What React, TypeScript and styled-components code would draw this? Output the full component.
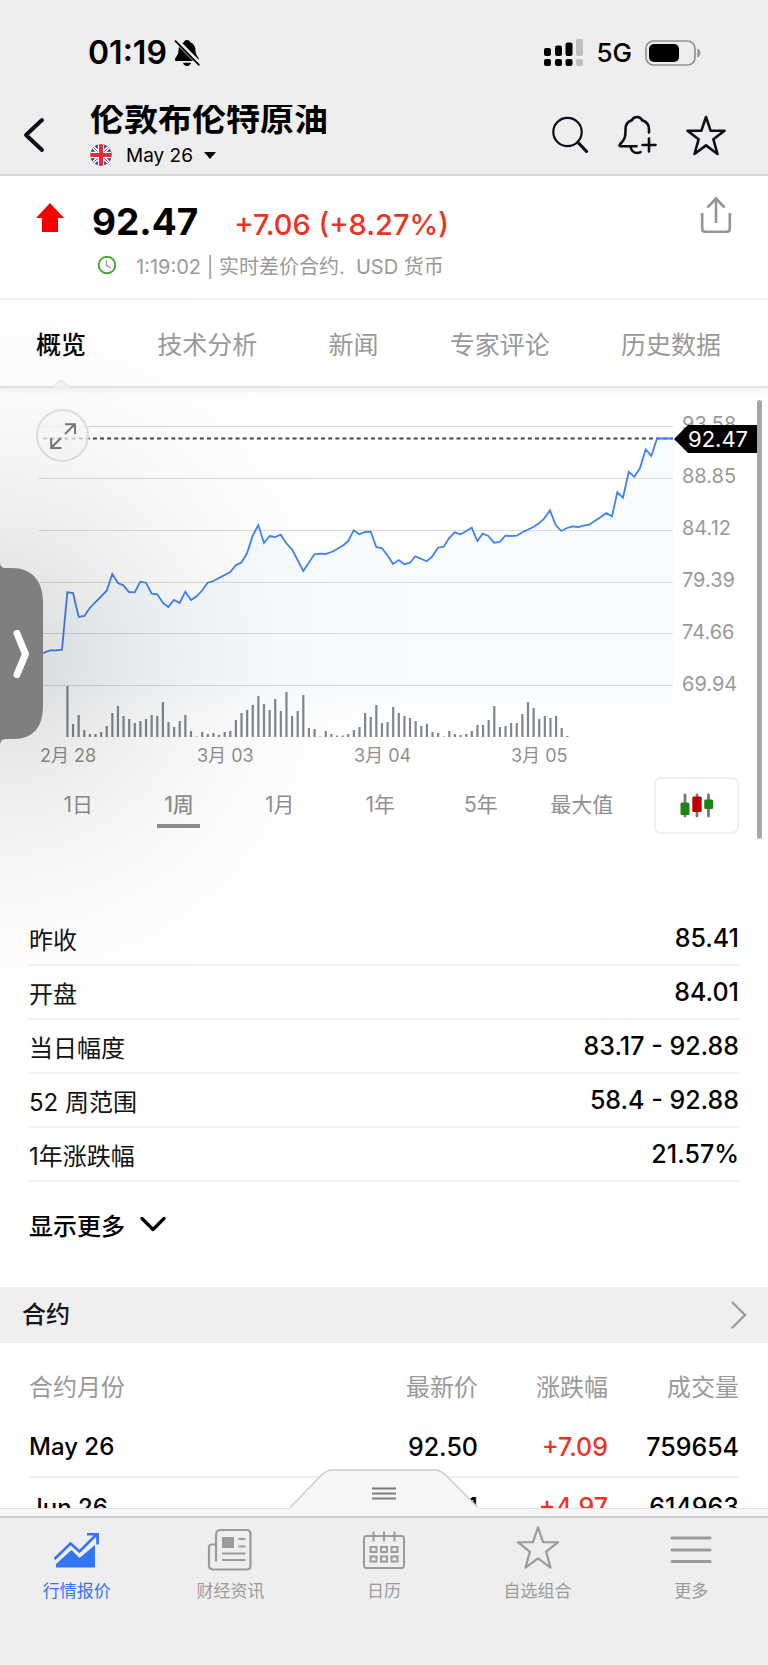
import React from "react";
import styled, { createGlobalStyle } from "styled-components";

const Global = createGlobalStyle`
  * { box-sizing: border-box; }
  html, body { margin: 0; padding: 0; background: #eeeeee; }
  body { font-family: Inter, "Noto Sans CJK SC", sans-serif; color: #000; }
  button { font: inherit; color: inherit; background: none; border: 0; padding: 0; cursor: pointer; }
  h1, h2, p { margin: 0; font-weight: inherit; font-size: inherit; }
  a { color: inherit; text-decoration: none; }
  svg { display: block; flex: none; }
`;

const Page = styled.div`
  position: relative;
  display: flex;
  flex-direction: column;
  height: 100vh;
  background: #fff;
`;

/* ---------- top ---------- */

const Top = styled.header`
  flex: none;
  background: #eeeeee;
  border-bottom: 2px solid #d6d6d6;
`;

const StatusBar = styled.div`
  display: flex;
  align-items: center;
  justify-content: space-between;
  height: 105px;
  padding: 0 67px 0 88px;
`;

const StatusGroup = styled.div<{ $gap: number }>`
  display: flex;
  align-items: center;
  gap: ${(p) => p.$gap}px;
`;

const Clock = styled.time`
  font-size: 32px;
  font-weight: 600;
  line-height: 40px;
`;

const Network = styled.span`
  font-size: 26px;
  font-weight: 500;
  line-height: 32px;
`;

const TitleBar = styled.div`
  display: flex;
  align-items: flex-start;
  height: 69px;
  padding: 0 42px 0 22px;
`;

const BackButton = styled.button`
  width: 68px;
  padding-top: 12px;
`;

const TitleBlock = styled.div`
  flex: 1;
`;

const TitleClip = styled.div`
  display: flex;
  align-items: flex-end;
  height: 34px;
  overflow: hidden;
`;

const Title = styled.h1`
  font-size: 34px;
  font-weight: 700;
  line-height: 40px;
`;

const ContractButton = styled.button`
  display: flex;
  align-items: center;
  height: 32px;
  font-size: 19px;
  gap: 11px;
`;

const ContractName = styled.span`
  margin-left: 3px;
`;

const TitleActions = styled.div`
  display: flex;
  gap: 28px;
  padding-top: 10px;
`;

/* ---------- quote ---------- */

const Quote = styled.section`
  flex: none;
  display: flex;
  height: 124px;
  padding: 20px 36px 0;
  border-bottom: 2px solid #f1f1f2;
`;

const ArrowCell = styled.div`
  width: 56px;
  padding-top: 7px;
`;

const QuoteBody = styled.div`
  flex: 1;
`;

const PriceRow = styled.div`
  display: flex;
  align-items: baseline;
  gap: 36px;
  line-height: 52px;
`;

const Price = styled.strong`
  font-size: 37px;
  font-weight: 700;
`;

const Change = styled.span`
  font-size: 29px;
  font-weight: 500;
  color: #ee3224;
`;

const MetaRow = styled.div`
  display: flex;
  align-items: center;
  gap: 19px;
  padding-left: 5px;
  height: 28px;
  font-size: 20px;
  color: #999;
  white-space: pre;
`;

const ShareButton = styled.button`
  align-self: flex-start;
`;

/* ---------- tabs ---------- */

const Tabs = styled.nav`
  position: relative;
  z-index: 1;
  flex: none;
  display: flex;
  align-items: center;
  justify-content: space-between;
  height: 88px;
  padding: 0 47px 0 36px;
  border-bottom: 2px solid #e2e2e2;
  box-shadow: 0 3px 5px rgba(0, 0, 0, 0.05);
`;

const Tab = styled.a<{ $active?: boolean }>`
  position: relative;
  padding-top: 4px;
  font-size: 25px;
  line-height: 82px;
  font-weight: ${(p) => (p.$active ? 500 : 400)};
  color: ${(p) => (p.$active ? "#000" : "#999")};
`;

const Notch = styled.svg`
  position: absolute;
  bottom: -2px;
  left: 50%;
  margin-left: -9px;
`;

/* ---------- chart ---------- */

const Content = styled.main`
  position: relative;
  flex: 1;
  min-height: 0;
  overflow: hidden;
`;

const ChartArea = styled.section`
  position: relative;
  display: grid;
  grid-template-columns: 1fr 95px;
  padding: 12px 0 0 39px;
`;

const Plot = styled.svg`
  width: 100%;
  height: auto;
`;

const Axis = styled.div`
  position: relative;
  display: flex;
  flex-direction: column;
  padding-left: 9px;
  font-size: 20px;
  line-height: 52px;
  margin-top: -2px;
  color: #999;
`;

const PriceTag = styled.div`
  position: absolute;
  left: 1px;
  top: 27px;
  width: 84px;
  height: 28px;
  padding-left: 14px;
  background: #000;
  clip-path: polygon(0 50%, 14px 0, 100% 0, 100% 100%, 14px 100%);
  color: #fff;
  font-size: 22px;
  line-height: 28px;
`;

const ExpandButton = styled.button`
  position: absolute;
  left: 36px;
  top: 21px;
  display: grid;
  place-items: center;
  width: 53px;
  height: 53px;
  border: 2px solid #e2e2e2;
  border-radius: 50%;
  background: rgba(252, 252, 252, 0.75);
`;

const Dates = styled.div`
  display: grid;
  grid-template-columns: repeat(4, 1fr);
  padding: 3px 100px 0 40px;
  font-size: 18px;
  line-height: 26px;
  color: #8f8f8f;
`;

const RangeRow = styled.div`
  display: flex;
  align-items: center;
  gap: 22px;
  padding: 8px 29px 0 28px;
`;

const Ranges = styled.div`
  flex: 1;
  display: grid;
  grid-template-columns: repeat(6, 1fr);
  justify-items: center;
`;

const Range = styled.button<{ $active?: boolean }>`
  min-width: 43px;
  height: 44px;
  padding-top: 3px;
  font-size: 21px;
  line-height: 34px;
  font-weight: ${(p) => (p.$active ? 500 : 400)};
  color: #8f8f8f;
  border-bottom: 4px solid ${(p) => (p.$active ? "#8f9190" : "transparent")};
`;

const CandleButton = styled.button`
  display: grid;
  place-items: center;
  width: 85px;
  height: 57px;
  border: 2px solid #efefef;
  border-radius: 7px;
  background: #fff;
`;

/* ---------- stats ---------- */

const Stats = styled.dl`
  margin: 0;
  padding: 78px 29px 0;
`;

const StatRow = styled.div`
  display: flex;
  align-items: center;
  justify-content: space-between;
  height: 54px;
  border-bottom: 2px solid #f3f3f3;
  font-size: 25px;
`;

const StatLabel = styled.dt`
  font-size: 24px;
  color: #111;
`;

const StatValue = styled.dd`
  margin: 0;
  font-weight: 500;
`;

const MoreButton = styled.button`
  display: flex;
  align-items: center;
  gap: 15px;
  height: 84px;
  margin: 0 29px 21px;
  font-size: 24px;
  font-weight: 500;
`;

const SectionLink = styled.a`
  display: flex;
  align-items: center;
  justify-content: space-between;
  height: 56px;
  padding: 0 21px 0 22px;
  background: #efefef;
  color: #14141e;
  font-size: 24px;
  font-weight: 500;
  line-height: 52px;
`;

const Contracts = styled.table`
  width: calc(100% - 58px);
  margin: 10px 29px 0;
  border-collapse: collapse;
  font-size: 25px;
  font-weight: 500;
  text-align: right;

  th:first-child { text-align: left; }
  th, td { padding: 0; height: 60px; }
  thead th { height: 64px; font-size: 24px; font-weight: 400; color: #999; }
  tbody th { font-size: 24px; font-weight: 500; }
  tbody tr { border-bottom: 2px solid #ededed; }
`;

const Gain = styled.td`
  color: #ee3224;
`;

/* ---------- overlays ---------- */

const EdgeShade = styled.div`
  position: absolute;
  z-index: 2;
  left: 0;
  top: 225px;
  width: 430px;
  height: 860px;
  pointer-events: none;
  background: radial-gradient(
    circle at 0 50%,
    rgba(0, 0, 0, 0.14) 0,
    rgba(0, 0, 0, 0.11) 60px,
    rgba(0, 0, 0, 0.07) 130px,
    rgba(0, 0, 0, 0.038) 200px,
    rgba(0, 0, 0, 0.013) 290px,
    transparent 430px
  );
`;

const SideHandle = styled.button`
  position: absolute;
  z-index: 3;
  left: 0;
  top: 562px;
`;

const ScrollThumb = styled.div`
  position: absolute;
  z-index: 2;
  right: 6px;
  top: 400px;
  width: 5px;
  height: 439px;
  border-radius: 3px;
  background: #a7a7a7;
`;

/* ---------- bottom ---------- */

const Bottom = styled.footer`
  position: relative;
  flex: none;
  border-top: 1px solid #e0e0e0;
  background: #f6f6f6;
  padding-top: 7px;
`;

const DrawerButton = styled.button`
  position: absolute;
  left: 50%;
  bottom: 100%;
  margin-left: -94px;
`;

const NavBar = styled.nav`
  display: grid;
  grid-template-columns: repeat(5, 1fr);
  height: 149px;
  border-top: 2px solid #cfcfcf;
  background: #eeeeee;
`;

const NavItem = styled.a<{ $active?: boolean }>`
  display: flex;
  flex-direction: column;
  align-items: center;
  gap: 7px;
  padding-top: 7px;
  font-size: 17px;
  line-height: 26px;
  color: ${(p) => (p.$active ? "#3674f6" : "#9b9b9b")};
`;

/* ---------- data ---------- */

const LINE: [number, number][] = [
  [39, 653], [43, 653], [50, 650.3], [56, 650.3], [62, 649.7], [67.3, 592.3], [73, 593], [78.7, 617], [84.3, 616],
  [90, 607.7], [106.7, 590.7], [112.3, 574], [118, 583], [123.3, 585.3], [129, 592], [134.7, 592.3], [140.3, 581.7],
  [146, 582.7], [151.7, 593.7], [157.3, 594.3], [163, 603], [168.3, 607], [174, 600], [179.7, 603], [185.3, 591.7],
  [191, 600], [196.7, 596.3], [202.3, 590.3], [207.7, 582.7], [213.3, 581], [230.3, 572], [236, 565], [241.3, 562.7],
  [247, 553.3], [252.7, 535.7], [258.3, 525], [264, 543], [269.7, 536], [275, 537], [280.7, 534.7], [286.3, 543.3],
  [292, 549.3], [303.3, 571], [314.3, 554.3], [320, 553.7], [325.7, 554], [333.3, 551.3], [342.7, 545.7], [348, 541.3],
  [353.7, 530.3], [359.3, 534.3], [365, 532], [370.7, 531.7], [376.3, 547], [382, 548.3], [388, 556], [393, 564],
  [398.7, 560], [404.3, 564.3], [410, 562.7], [415.3, 556.3], [421, 558.7], [426.7, 561.3], [432.3, 556.3],
  [438, 547.7], [443.7, 546.7], [449, 538.3], [454.7, 532.3], [460.3, 534.3], [466, 531.3], [471.7, 527.6],
  [477.3, 541], [482.7, 533.7], [488.3, 536], [494, 542.7], [499.7, 542], [505.3, 535.7], [511, 536], [516.7, 535.7],
  [522.3, 532.3], [533.3, 527], [539, 523.3], [544.3, 518.3], [550, 510.3], [555.7, 525], [561.3, 531], [567, 528],
  [572.7, 526.3], [578.3, 527], [583.7, 525.7], [589.3, 524.7], [595, 520.7], [600.7, 517], [606.3, 513],
  [612, 516.3], [617.3, 492.3], [623, 497.7], [628.7, 472], [634.3, 476.7], [640, 468], [645.7, 449.3],
  [651.3, 456], [657, 438.5], [673, 438.5],
];

const VOLUME = [
  51, 13, 22, 7, 3, 3, 5, 11, 24, 31, 21, 18, 14, 16, 18, 22, 21, 35, 15, 10, 16, 22, 6, 0.5, 5, 3, 4, 2, 5, 6, 17, 24,
  27, 32, 41, 33, 27, 38, 26, 45, 21, 26, 42, 9, 8, 0.5, 6, 3, 1.5, 1.5, 3, 7, 10, 24, 20, 32, 14, 15, 30, 24, 21, 19,
  16, 11, 13, 5, 4, 0.5, 6, 3, 2, 3, 6, 12, 12, 17, 31, 10, 11, 14, 14, 23, 35, 29, 18, 21, 19, 21, 9, 1,
];

const GRID = [426, 478, 530, 582, 633, 685];
const LEVELS = ["93.58", "88.85", "84.12", "79.39", "74.66", "69.94"];
const DATES = ["2月 28", "3月 03", "3月 04", "3月 05"];
const RANGES = ["1日", "1周", "1月", "1年", "5年", "最大值"];
const TABS = ["概览", "技术分析", "新闻", "专家评论", "历史数据"];

const STATS = [
  ["昨收", "85.41"],
  ["开盘", "84.01"],
  ["当日幅度", "83.17 - 92.88"],
  ["52 周范围", "58.4 - 92.88"],
  ["1年涨跌幅", "21.57%"],
];

const CONTRACTS = [
  ["May 26", "92.50", "+7.09", "759654"],
  ["Jun 26", "88.51", "+4.97", "614963"],
];

/* ---------- drawings ---------- */

const MutedBell = () => (
  <svg width="26" height="28" viewBox="0 0 26 28">
    <path d="M13 1c1.900 0 3 1 3.200 2.300C19.800 4.600 21.500 7.700 21.500 11.500c0 5 3.500 6.500 3.500 9.200 0 .9-.6 1.300-1.500 1.300H2.500C1.600 22 1 21.600 1 20.700c0-2.700 3.500-4.200 3.500-9.200 0-3.800 1.700-6.900 5.300-8.200C10 2 11.100 1 13 1z" />
    <path d="M9 23.800h8c-.3 1.900-1.900 3.200-4 3.200s-3.700-1.300-4-3.200z" />
    <path d="M2.200 1.500 25.500 25" stroke="#eee" strokeWidth="5" />
    <path d="M1.500 2.200 24.700 25.700" stroke="#000" strokeWidth="1.900" strokeLinecap="round" />
  </svg>
);

const Signal = () => (
  <svg width="39" height="28" viewBox="0 0 39 28">
    <rect x="0" y="9" width="7" height="8" rx="2" />
    <rect x="11" y="6.500" width="7" height="10.500" rx="2" />
    <rect x="21.500" y="3.500" width="7" height="13.500" rx="2" />
    <rect x="0" y="20" width="7" height="7" rx="2" />
    <rect x="11" y="20" width="7" height="7" rx="2" />
    <rect x="21.500" y="20" width="7" height="7" rx="2" />
    <g fill="#bfbfbf">
      <rect x="32" y="0" width="7" height="17" rx="2" />
      <rect x="32" y="20" width="7" height="7" rx="2" />
    </g>
  </svg>
);

const Battery = () => (
  <svg width="56" height="26" viewBox="0 0 56 26">
    <rect x="1" y="1" width="49" height="24" rx="7.500" fill="none" stroke="#939393" strokeWidth="1.700" />
    <rect x="4" y="4" width="30" height="18" rx="5" />
    <path d="M52.300 8.500c2 .9 3 2.600 3 4.500s-1 3.600-3 4.500z" fill="#939393" />
  </svg>
);

const Flag = () => (
  <svg width="22" height="22" viewBox="0 0 22 22">
    <clipPath id="flag"><circle cx="11" cy="11" r="10.700" /></clipPath>
    <g clipPath="url(#flag)">
      <rect width="22" height="22" fill="#2b36a0" />
      <path d="M0 0 22 22M22 0 0 22" stroke="#fff" strokeWidth="3.600" />
      <path d="M0 0 22 22M22 0 0 22" stroke="#ec2a3a" strokeWidth="1" />
      <path d="M11 0v22M0 11h22" stroke="#fff" strokeWidth="6.400" />
      <path d="M11 0v22M0 11h22" stroke="#ec2a3a" strokeWidth="4" />
    </g>
  </svg>
);

const starPath = "M20 2 24.600 15.700H38.500L27.400 24.300 31.500 39 20 30.400 8.500 39 12.600 24.300 1.500 15.700H15.400Z";

const ICON = { fill: "none", stroke: "#0d0d18", strokeWidth: 2.6, strokeLinecap: "round", strokeLinejoin: "round" } as const;

function PriceChart() {
  const points = LINE.map((p) => p.join(",")).join(" ");
  return (
    <Plot viewBox="39 400 634 340" role="img" aria-label="价格走势">
      <defs>
        <linearGradient id="area" gradientUnits="userSpaceOnUse" x1="0" y1="685" x2="0" y2="722">
          <stop offset="0" stopColor="#f8fcff" />
          <stop offset="1" stopColor="#f8fcff" stopOpacity="0" />
        </linearGradient>
      </defs>
      <polygon points={`39,722 ${points} 673,722`} fill="url(#area)" />
      {GRID.map((y) => (
        <line key={y} x1="39" x2="673" y1={y + 0.5} y2={y + 0.5} stroke="#d8dadc" strokeWidth="1.200" />
      ))}
      <line x1="43" x2="673" y1="438.500" y2="438.500" stroke="#444" strokeWidth="2" strokeDasharray="4 3.130" />
      <polyline points={points} fill="none" stroke="#3f83f2" strokeWidth="1.800" strokeLinejoin="miter" />
      {VOLUME.map((h, i) => (
        <rect key={i} x={66.3 + i * 5.617} y={737 - h} width="2.200" height={h} fill="#80868b" />
      ))}
    </Plot>
  );
}

const navIcons = [
  <svg key="q" width="48" height="46" viewBox="0 0 48 46" fill="#3674f6">
    <path d="M3 42.500V39L18.500 25 26.500 33 42 20V42.500Z" />
    <path d="M1.500 34 17.500 18.500 26.500 26.500 43 10" fill="none" stroke="#3674f6" strokeWidth="2.600" />
    <path d="M34 8H46V19.500H43.200L43.200 12.500 40 10.500H34Z" />
  </svg>,
  <svg key="n" width="48" height="46" viewBox="0 0 48 46" fill="none" stroke="#9b9b9b" strokeWidth="2.200">
    <path d="M10 36.500V10.500C10 7.500 11.500 5 14 5H40.500C43 5 44.500 6.500 44.500 9V41C44.500 43.500 43 44.500 40.500 44.500H7.500C4.500 44.500 3 43 3 40.500V22C3 20 4 19.500 6 19.500H9.500" />
    <rect x="16" y="12" width="12" height="11" fill="#9b9b9b" stroke="none" />
    <path d="M32.500 14h7M32.500 21.500h7M16 28.500h23.500M16 35h23.500" />
  </svg>,
  <svg key="c" width="48" height="46" viewBox="0 0 48 46" fill="none" stroke="#9b9b9b" strokeWidth="2">
    <rect x="4" y="11" width="40" height="32" rx="2.500" />
    <path d="M13.500 6.500v10M24 6.500v10M34.500 6.500v10" />
    {[10.5, 21, 31.5].map((x) => [22, 31.5].map((y) => <rect key={`${x}-${y}`} x={x} y={y} width="6" height="5" />))}
  </svg>,
  <svg key="s" width="48" height="46" viewBox="-2 0 44 42" fill="none" stroke="#9b9b9b" strokeWidth="2" strokeLinejoin="round">
    <path d={starPath} />
  </svg>,
  <svg key="m" width="48" height="46" viewBox="0 0 48 46" stroke="#9b9b9b" strokeWidth="3" strokeLinecap="round">
    <path d="M5 13H43M5 25H43M5 36.500H43" />
  </svg>,
];
const NAV = ["行情报价", "财经资讯", "日历", "自选组合", "更多"];

export default function App() {
  return (
    <Page>
      <Global />
      <Top>
        <StatusBar>
          <StatusGroup $gap={7}>
            <Clock>01:19</Clock>
            <MutedBell />
          </StatusGroup>
          <StatusGroup $gap={13}>
            <Signal />
            <Network>5G</Network>
            <Battery />
          </StatusGroup>
        </StatusBar>
        <TitleBar>
          <BackButton aria-label="返回">
            <svg width="24" height="36" viewBox="0 0 24 36" {...ICON} strokeWidth={4}>
              <path d="M20 3 4 18 20 33" />
            </svg>
          </BackButton>
          <TitleBlock>
            <TitleClip>
              <Title>伦敦布伦特原油</Title>
            </TitleClip>
            <ContractButton>
              <Flag />
              <ContractName>May 26</ContractName>
              <svg width="12" height="7" viewBox="0 0 12 7"><path d="M0 0h12L6 7z" /></svg>
            </ContractButton>
          </TitleBlock>
          <TitleActions>
            <button aria-label="搜索">
              <svg width="40" height="42" viewBox="0 0 40 42" {...ICON}>
                <circle cx="17.500" cy="17" r="14.200" strokeWidth="2.200" />
                <path d="M28 27.500 36.500 36.300" strokeWidth="3.200" />
              </svg>
            </button>
            <button aria-label="添加提醒">
              <svg width="40" height="42" viewBox="0 0 40 42" {...ICON}>
                <path d="M31 17.500V14.500C31 9.500 28 6.500 24.300 5.300 23 2.800 21.500 2 19 2S15 2.800 13.700 5.300C10 6.500 7.500 9.500 7.500 14.500 7.500 22 7 24.500 2.200 29 1 30.500 1.500 31.200 3 31.200H18.500M12.500 32C13.500 36 16 38 19 38 20.500 38 21.500 37.700 22.500 37.200" />
                <path d="M31 23.500V36.500M24.500 30H37.500" />
              </svg>
            </button>
            <button aria-label="加入自选">
              <svg width="40" height="42" viewBox="0 0 40 42" {...ICON}>
                <path d={starPath} />
              </svg>
            </button>
          </TitleActions>
        </TitleBar>
      </Top>

      <Quote>
        <ArrowCell>
          <svg width="28" height="30" viewBox="0 0 28 30" fill="#f50000"><path d="M14 0 28 15H22V29H6V15H0Z" /></svg>
        </ArrowCell>
        <QuoteBody>
          <PriceRow>
            <Price>92.47</Price>
            <Change>+7.06 (+8.27%)</Change>
          </PriceRow>
          <MetaRow>
            <svg width="20" height="20" viewBox="0 0 20 20" fill="none">
              <circle cx="10" cy="10" r="8.300" stroke="#43a52c" strokeWidth="1.900" />
              <path d="M9.500 5.500V10.500L14 13" stroke="#999" strokeWidth="1.400" />
            </svg>
            <span>1:19:02 | 实时差价合约.  USD 货币</span>
          </MetaRow>
        </QuoteBody>
        <ShareButton aria-label="分享">
          <svg width="32" height="38" viewBox="0 0 32 38" fill="none" stroke="#959595" strokeWidth="2.600">
            <path d="M2.200 17V32.500C2.200 34.700 3.300 35.800 5.500 35.800H26.500C28.700 35.800 29.800 34.700 29.800 32.500V17" />
            <path d="M16 27V3M7.500 11.500 16 2.500 24.500 11.500" />
          </svg>
        </ShareButton>
      </Quote>

      <Tabs>
        {TABS.map((t, i) => (
          <Tab key={t} href="#" $active={i === 0}>
            {t}
            {i === 0 && (
              <Notch width="18" height="9" viewBox="0 0 18 9">
                <path d="M0 9 9 1 18 9Z" fill="#f4f4f4" />
                <path d="M0 8.300 9 1 18 8.300" fill="none" stroke="#e6e6e6" strokeWidth="1.300" />
              </Notch>
            )}
          </Tab>
        ))}
      </Tabs>

      <Content>
        <ChartArea>
          <PriceChart />
          <Axis>
            {LEVELS.map((l) => <span key={l}>{l}</span>)}
            <PriceTag>92.47</PriceTag>
          </Axis>
          <ExpandButton aria-label="全屏">
            <svg width="26" height="26" viewBox="0 0 26 26" fill="none" stroke="#777" strokeWidth="2">
              <path d="M15 11 24.500 1.500M15 1.200H25V11M11 15 1.500 24.500M1.200 15V25H11.500" />
            </svg>
          </ExpandButton>
        </ChartArea>
        <Dates>
          {DATES.map((d) => <span key={d}>{d}</span>)}
        </Dates>
        <RangeRow>
          <Ranges>
            {RANGES.map((r, i) => <Range key={r} $active={i === 1}>{r}</Range>)}
          </Ranges>
          <CandleButton aria-label="K线图">
            <svg width="34" height="26" viewBox="0 0 34 26">
              <path d="M5 2V23M17 2V23M28.500 2V23" stroke="#777" strokeWidth="2.800" strokeLinecap="round" />
              <rect x="0.500" y="9.500" width="9" height="12.500" rx="1.500" fill="#1d8412" />
              <rect x="12.300" y="3.500" width="9.400" height="15.500" rx="1.500" fill="#bf0000" />
              <rect x="24.200" y="6.500" width="9" height="9.500" rx="1.500" fill="#1d8412" />
            </svg>
          </CandleButton>
        </RangeRow>

        <Stats>
          {STATS.map(([k, v]) => (
            <StatRow key={k}>
              <StatLabel>{k}</StatLabel>
              <StatValue>{v}</StatValue>
            </StatRow>
          ))}
        </Stats>
        <MoreButton>
          显示更多
          <svg width="26" height="16" viewBox="0 0 26 16" fill="none" stroke="#000" strokeWidth="3.200" strokeLinecap="round" strokeLinejoin="round">
            <path d="M2 2.500 13 13.500 24 2.500" />
          </svg>
        </MoreButton>

        <SectionLink href="#">
          <h2>合约</h2>
          <svg width="16" height="28" viewBox="0 0 16 28" fill="none" stroke="#9c9c9c" strokeWidth="2.400" strokeLinecap="round">
            <path d="M1.500 1.500 14 14 1.500 26.500" />
          </svg>
        </SectionLink>
        <Contracts>
          <colgroup>
            <col />
            <col width="130" />
            <col width="130" />
            <col width="131" />
          </colgroup>
          <thead>
            <tr>
              {["合约月份", "最新价", "涨跌幅", "成交量"].map((h) => <th key={h} scope="col">{h}</th>)}
            </tr>
          </thead>
          <tbody>
            {CONTRACTS.map(([m, p, c, v]) => (
              <tr key={m}>
                <th scope="row">{m}</th>
                <td>{p}</td>
                <Gain>{c}</Gain>
                <td>{v}</td>
              </tr>
            ))}
          </tbody>
        </Contracts>
      </Content>

      <Bottom>
        <DrawerButton aria-label="展开">
          <svg width="188" height="40" viewBox="0 0 188 40">
            <path d="M0 38.500 32 5.500C36 1.800 38 1 42 1H144C149 1 152 2.500 155 5.500L188 38.500V40H0Z" fill="#f6f6f6" />
            <path d="M0 38.500 32 5.500C36 1.800 38 1 42 1H144C149 1 152 2.500 155 5.500L188 38.500" fill="none" stroke="#cacaca" strokeWidth="1.400" />
            <path d="M82 19.500H106M82 24.500H106M82 29.500H106" stroke="#7d7d7d" strokeWidth="2" />
          </svg>
        </DrawerButton>
        <NavBar>
          {NAV.map((n, i) => (
            <NavItem key={n} href="#" $active={i === 0}>
              {navIcons[i]}
              {n}
            </NavItem>
          ))}
        </NavBar>
      </Bottom>

      <ScrollThumb />
      <EdgeShade />
      <SideHandle aria-label="打开侧栏">
        <svg width="44" height="184" viewBox="0 0 44 184">
          <path d="M0 0C0 4 2 6 6 6H12C31 6 43 18 43 40V144C43 165 33 177 14 177H6C2 177 0 179 0 184Z" fill="#7f7f7f" />
          <path d="M17 71.500 25.500 92 17 112.500" fill="none" stroke="#fff" strokeWidth="7" strokeLinecap="round" strokeLinejoin="round" />
        </svg>
      </SideHandle>
    </Page>
  );
}
